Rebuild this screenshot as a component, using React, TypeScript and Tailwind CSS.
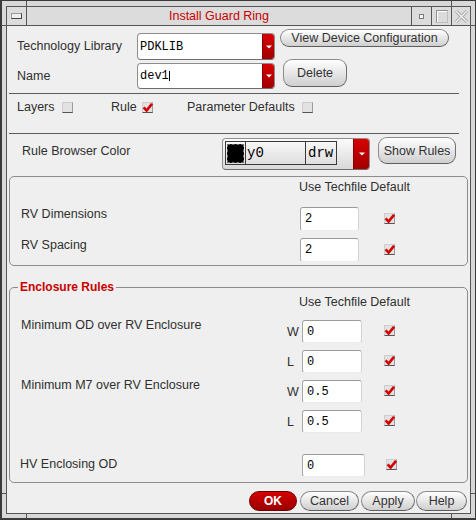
import React from "react";

const SANS = "font-['Liberation_Sans',Arial,sans-serif]";
const MONO = "font-['Liberation_Mono','Courier_New',monospace]";

function Check({ checked }: { checked?: boolean }) {
  return (
    <div className="relative w-[11px] h-[11px] shrink-0 bg-[#e2e2e2] border border-t-[#cdcdcd] border-l-[#cdcdcd] border-r-[#9c9c9c] border-b-[#555555]">
      {checked && (
        <svg className="absolute left-[-1px] top-[-1px]" width="11" height="11" viewBox="0 0 11 11">
          <path d="M1.6 5.3 L4.6 8.6 L10 1.8" fill="none" stroke="#d40000" strokeWidth="2.6" />
        </svg>
      )}
    </div>
  );
}

function RedArrow({ cls }: { cls: string }) {
  return (
    <div className={`flex items-center justify-center bg-linear-to-b from-[#d80000] to-[#a20000] border-l border-[#8a0000] ${cls}`}>
      <svg width="6" height="4" viewBox="0 0 6 4">
        <path d="M0 0.5 H6 L3 3.5 Z" fill="#ffffff" />
      </svg>
    </div>
  );
}

function Combo({ cls, text, cursor }: { cls: string; text: string; cursor?: boolean }) {
  return (
    <div className={`flex w-[138px] rounded-[4px] border border-[#8e8e8e] border-b-[#6e6e6e] overflow-hidden bg-white ${cls}`}>
      <div className={`flex-1 flex items-center pl-[2px] ${MONO} text-[12px] text-black`}>
        {text}
        {cursor && <span className="inline-block w-px h-[10px] bg-black" />}
      </div>
      <RedArrow cls="w-[12px]" />
    </div>
  );
}

function Btn({ cls, children }: { cls: string; children: React.ReactNode }) {
  return (
    <div
      className={`flex items-center justify-center shrink-0 border border-[#8c8c8c] border-b-[#5e5e5e] border-r-[#707070] bg-linear-to-b from-[#ffffff] to-[#cfcfcf] text-[#333333] ${cls}`}
    >
      {children}
    </div>
  );
}

function Input({ cls, v }: { cls: string; v: string }) {
  return (
    <div
      className={`flex items-center shrink-0 pl-[4px] bg-white rounded-[3px] border border-t-[#9a9a9a] border-l-[#a6a6a6] border-r-[#d4d4d4] border-b-[#ececec] ${MONO} text-[12px] text-black ${cls}`}
    >
      {v}
    </div>
  );
}

function ERow({ label, wl, v, mt }: { label: string; wl: string; v: string; mt: string }) {
  return (
    <div className={`flex items-start pl-[11px] ${mt}`}>
      <div className="w-[266px] -mt-[2px]">{label}</div>
      <div className="w-[15px] h-[23px] flex items-center">{wl}</div>
      <Input cls="w-[60px] h-[23px]" v={v} />
      <div className="ml-[22px] mt-[5px]">
        <Check checked />
      </div>
    </div>
  );
}

export default function App() {
  return (
    <div
      className={`relative w-[476px] h-[520px] bg-[#d8d8d8] border-t border-r border-l-2 border-b-2 border-[#3a3a3a] pt-[5px] pl-[4px] pr-[4px] pb-[4px] ${SANS} text-[12.5px] leading-[14px] text-[#303030]`}
    >
      <div className="flex flex-col h-full border border-[#555555]">
        {/* title bar */}
        <div className="flex h-[19px] shrink-0 border-b border-[#555555] bg-[#dcdcdc]">
          <div className="w-[20px] border-r border-[#555555] flex items-center justify-center">
            <div className="w-[11px] h-[6px] bg-[#eeeeee] border border-[#9a9a9a] border-b-[#444444] border-r-[#444444]" />
          </div>
          <div className="flex-1 flex items-center justify-center text-[#c80000]">Install Guard Ring</div>
          <div className="w-[20px] border-l border-[#555555] flex items-center justify-center">
            <div className="w-[5px] h-[5px] bg-[#f6f6f6] border border-[#7a7a7a]" />
          </div>
          <div className="w-[20px] border-l border-[#555555] flex items-center justify-center">
            <div className="w-[12px] h-[13px] border border-[#8e8e8e] border-r-[#bdbdbd] border-b-[#bdbdbd] shadow-[inset_1px_1px_0_#ffffff]" />
          </div>
          <div className="w-[19px] border-l border-[#555555] flex items-center justify-center">
            <svg width="13" height="13" viewBox="0 0 13 13">
              <path d="M1 1 L12 12 M12 1 L1 12" stroke="#a9a9a9" strokeWidth="3.2" />
              <path d="M1 1 L12 12 M12 1 L1 12" stroke="#f2f2f2" strokeWidth="1.2" />
            </svg>
          </div>
        </div>

        {/* content */}
        <div className="flex-1 flex flex-col bg-[#efefef]">
          {/* row 1 */}
          <div className="flex items-start mt-[3px] pl-[10px]">
            <div className="w-[120px] h-[27px] mt-[4px] flex items-center pb-[1px]">Technology Library</div>
            <Combo cls="h-[27px] mt-[4px]" text="PDKLIB" />
            <Btn cls="ml-[5px] w-[169px] h-[18px] rounded-full">View Device Configuration</Btn>
          </div>
          {/* row 2 */}
          <div className="flex items-start -mt-px pl-[10px]">
            <div className="w-[120px] h-[26px] mt-[4px] flex items-center">Name</div>
            <Combo cls="h-[26px] mt-[4px]" text="dev1" cursor />
            <Btn cls="ml-[8px] w-[64px] h-[28px] rounded-[9px]">Delete</Btn>
          </div>
          <div className="mt-[4px] ml-[2px] w-[450px] h-px bg-[#5c5c5c]" />
          {/* row 3 */}
          <div className="flex items-center h-[26px] pl-[10px]">
            <div className="w-[45px]">Layers</div>
            <Check />
            <div className="ml-[38px] w-[31px]">Rule</div>
            <Check checked />
            <div className="ml-[34px] w-[115px]">Parameter Defaults</div>
            <Check />
          </div>
          <div className="mt-[13px] ml-[2px] w-[450px] h-px bg-[#5c5c5c]" />
          {/* row 4 */}
          <div className="flex items-start pl-[15px]">
            <div className="w-[200px] mt-[10px]">Rule Browser Color</div>
            <div className="flex w-[148px] h-[32px] mt-[4px] rounded-[4px] border border-[#8e8e8e] border-b-[#6e6e6e] overflow-hidden bg-linear-to-b from-[#fbfbfb] to-[#d9d9d9]">
              <div className="flex ml-[2px] mt-[2px] w-[112px] h-[24px] border border-[#3a3a3a]">
                <div className="w-[20px] border-r border-[#3a3a3a] flex items-center justify-center">
                  <div className="w-[17px] h-[19px] bg-black border border-dashed border-[#6a6a6a]" />
                </div>
                <div className={`w-[60px] border-r border-[#3a3a3a] flex items-center pl-[1px] ${MONO} text-[14px] text-black`}>y0</div>
                <div className={`flex-1 flex items-center pl-[2px] ${MONO} text-[14px] text-black`}>drw</div>
              </div>
              <div className="flex-1" />
              <RedArrow cls="w-[16px]" />
            </div>
            <Btn cls="ml-[8px] mt-[3px] w-[78px] h-[27px] rounded-[9px]">Show Rules</Btn>
          </div>

          {/* group 1 */}
          <div className="ml-[2px] mt-[6px] w-[459px] h-[90px] shrink-0 border border-[#8c8c8c] rounded-[5px]">
            <div className="pl-[289px] mt-[3px]">Use Techfile Default</div>
            <div className="flex items-start pl-[11px] mt-[13px]">
              <div className="w-[279px]">RV Dimensions</div>
              <Input cls="w-[59px] h-[24px]" v="2" />
              <div className="ml-[25px] mt-[6px]">
                <Check checked />
              </div>
            </div>
            <div className="flex items-start pl-[11px] mt-[7px]">
              <div className="w-[279px]">RV Spacing</div>
              <Input cls="w-[59px] h-[24px]" v="2" />
              <div className="ml-[25px] mt-[6px]">
                <Check checked />
              </div>
            </div>
          </div>

          {/* group 2 */}
          <fieldset className="ml-[2px] mt-[14px] w-[459px] shrink-0 border border-[#8c8c8c] rounded-[5px] pb-[5px]">
            <legend className="ml-[8px] px-[2px] text-[12px] font-bold text-[#c80000] leading-[14px]">Enclosure Rules</legend>
            <div className="pl-[289px] mt-[1px]">Use Techfile Default</div>
            <ERow label="Minimum OD over RV Enclosure" wl="W" v="0" mt="mt-[11px]" />
            <ERow label="" wl="L" v="0" mt="mt-[7px]" />
            <ERow label="Minimum M7 over RV Enclosure" wl="W" v="0.5" mt="mt-[7px]" />
            <ERow label="" wl="L" v="0.5" mt="mt-[7px]" />
            <div className="flex items-start pl-[10px] mt-[21px]">
              <div className="w-[282px] mt-[3px]">HV Enclosing OD</div>
              <Input cls="w-[63px] h-[23px]" v="0" />
              <div className="ml-[21px] mt-[5px]">
                <Check checked />
              </div>
            </div>
          </fieldset>

          {/* bottom buttons */}
          <div className="flex justify-end pr-[3px] mt-[8px]">
            <div className="w-[48px] h-[20px] rounded-full bg-linear-to-b from-[#d60000] to-[#9a0000] border border-[#6a0000] text-white font-bold text-[12px] flex items-center justify-center">
              OK
            </div>
            <Btn cls="ml-[3px] w-[59px] h-[20px] rounded-full">Cancel</Btn>
            <Btn cls="ml-[2px] w-[54px] h-[20px] rounded-full">Apply</Btn>
            <Btn cls="ml-[1px] w-[51px] h-[20px] rounded-full">Help</Btn>
          </div>
        </div>
      </div>

      {/* window frame corner handles */}
      <div className="absolute left-[24px] top-0 w-px h-[5px] bg-[#555555]" />
      <div className="absolute left-[449px] top-0 w-px h-[5px] bg-[#555555]" />
      <div className="absolute left-[24px] top-[513px] w-px h-[4px] bg-[#555555]" />
      <div className="absolute left-[449px] top-[513px] w-px h-[4px] bg-[#555555]" />
      <div className="absolute left-0 top-[24px] w-[4px] h-px bg-[#555555]" />
      <div className="absolute left-[469px] top-[24px] w-[4px] h-px bg-[#555555]" />
      <div className="absolute left-0 top-[492px] w-[4px] h-px bg-[#555555]" />
      <div className="absolute left-[469px] top-[492px] w-[4px] h-px bg-[#555555]" />
    </div>
  );
}
